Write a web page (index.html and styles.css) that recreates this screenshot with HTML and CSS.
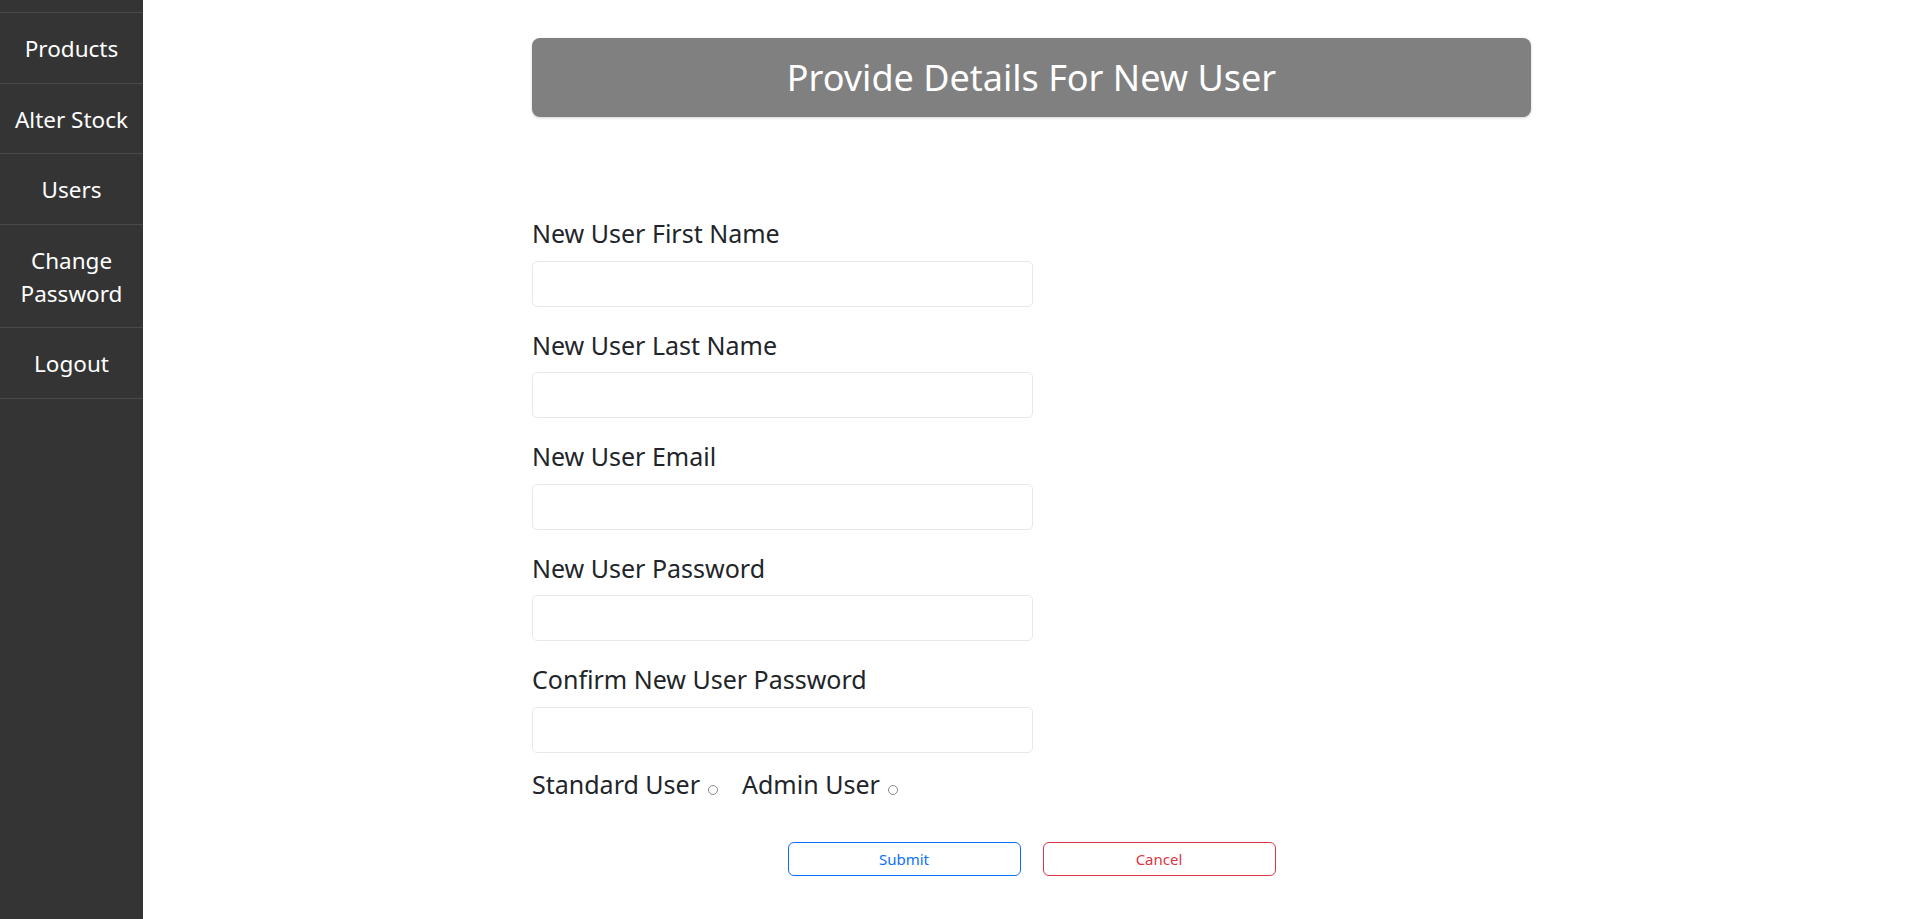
FILE: index.html
```html
<!DOCTYPE html>
<html lang="en">
<head>
<meta charset="utf-8">
<title>New User</title>
<link rel="stylesheet" href="styles.css">
</head>
<body>
<div class="layout">
  <nav class="sidebar">
    <ul class="nav-list">
      <li class="nav-item"><a href="#">Products</a></li>
      <li class="nav-item"><a href="#">Alter Stock</a></li>
      <li class="nav-item"><a href="#">Users</a></li>
      <li class="nav-item"><a href="#">Change Password</a></li>
      <li class="nav-item"><a href="#">Logout</a></li>
    </ul>
  </nav>
  <main class="main">
    <div class="container">
      <h1 class="title">Provide Details For New User</h1>
      <form class="form">
        <div class="group">
          <label class="label" for="fn">New User First Name</label>
          <input class="field" id="fn" type="text">
        </div>
        <div class="group">
          <label class="label" for="ln">New User Last Name</label>
          <input class="field" id="ln" type="text">
        </div>
        <div class="group">
          <label class="label" for="em">New User Email</label>
          <input class="field" id="em" type="email">
        </div>
        <div class="group">
          <label class="label" for="pw">New User Password</label>
          <input class="field" id="pw" type="password">
        </div>
        <div class="group last">
          <label class="label" for="cpw">Confirm New User Password</label>
          <input class="field" id="cpw" type="password">
        </div>
        <div class="roles">
          <label class="role">Standard User <input class="radio" type="radio" name="role"></label>
          <label class="role">Admin User <input class="radio" type="radio" name="role"></label>
        </div>
        <div class="actions">
          <button class="btn btn-blue" type="button">Submit</button>
          <button class="btn btn-red" type="button">Cancel</button>
        </div>
      </form>
    </div>
  </main>
</div>
</body>
</html>
```
FILE: styles.css
```css
* { box-sizing: border-box; }
html, body { margin: 0; padding: 0; height: 100%; }
body {
  font-family: "Noto Sans", "Open Sans", "Liberation Sans", sans-serif;
  color: #212529;
  background: #fff;
  overflow: hidden;
}
.layout { display: flex; height: 919px; }
.sidebar {
  width: 143px;
  flex: 0 0 143px;
  background: #343434;
  padding-top: 12px;
}
.nav-list { list-style: none; margin: 0; padding: 0; }
.nav-item {
  border-top: 1px solid #4a4a4a;
  padding: 19px 2px 17.5px;
  text-align: center;
}
.nav-item:last-child { border-bottom: 1px solid #4a4a4a; }
.nav-item a {
  color: #fff;
  text-decoration: none;
  font-size: 22.5px;
  line-height: 33px;
  display: block;
}
.main { flex: 1; padding-top: 38px; }
.container { width: 999px; margin: 0 auto; }
.title {
  margin: 0;
  background: #808080;
  color: #fff;
  font-weight: 400;
  font-size: 36px;
  line-height: 53px;
  padding: 13px 0;
  text-align: center;
  border-radius: 8px;
  box-shadow: 0 1px 3px rgba(0,0,0,0.18);
}
.form { padding-top: 98px; }
.group { display: flex; flex-direction: column; width: 501px; margin-bottom: 20px; }
.group.last { margin-bottom: 13px; }
.label { font-size: 25px; line-height: 37.5px; margin-bottom: 8px; }
.field {
  height: 46px;
  border: 1px solid #e6e8ea;
  border-radius: 5px;
  font: inherit;
  font-size: 16px;
  padding: 0 12px;
  outline: none;
}
.roles { display: flex; gap: 24px; font-size: 25px; line-height: 37.5px; }
.role { display: flex; align-items: baseline; }
.radio {
  appearance: none;
  -webkit-appearance: none;
  width: 10px;
  height: 10px;
  margin: 0 0 0 8px;
  border: 1px solid #8a8a8a;
  border-radius: 50%;
  background: #fff;
  align-self: baseline;
  position: relative;
  top: 1px;
}
.actions { display: flex; justify-content: center; gap: 22px; margin-top: 39px; }
.btn {
  width: 233px;
  height: 34px;
  background: #fff;
  border-radius: 6px;
  font-family: inherit;
  font-size: 15px;
  line-height: 21px;
  padding: 0;
  cursor: pointer;
}
.btn-blue { border: 1.5px solid #0d6efd; color: #0d6efd; }
.btn-red { border: 1.5px solid #dc3545; color: #dc3545; }
```
